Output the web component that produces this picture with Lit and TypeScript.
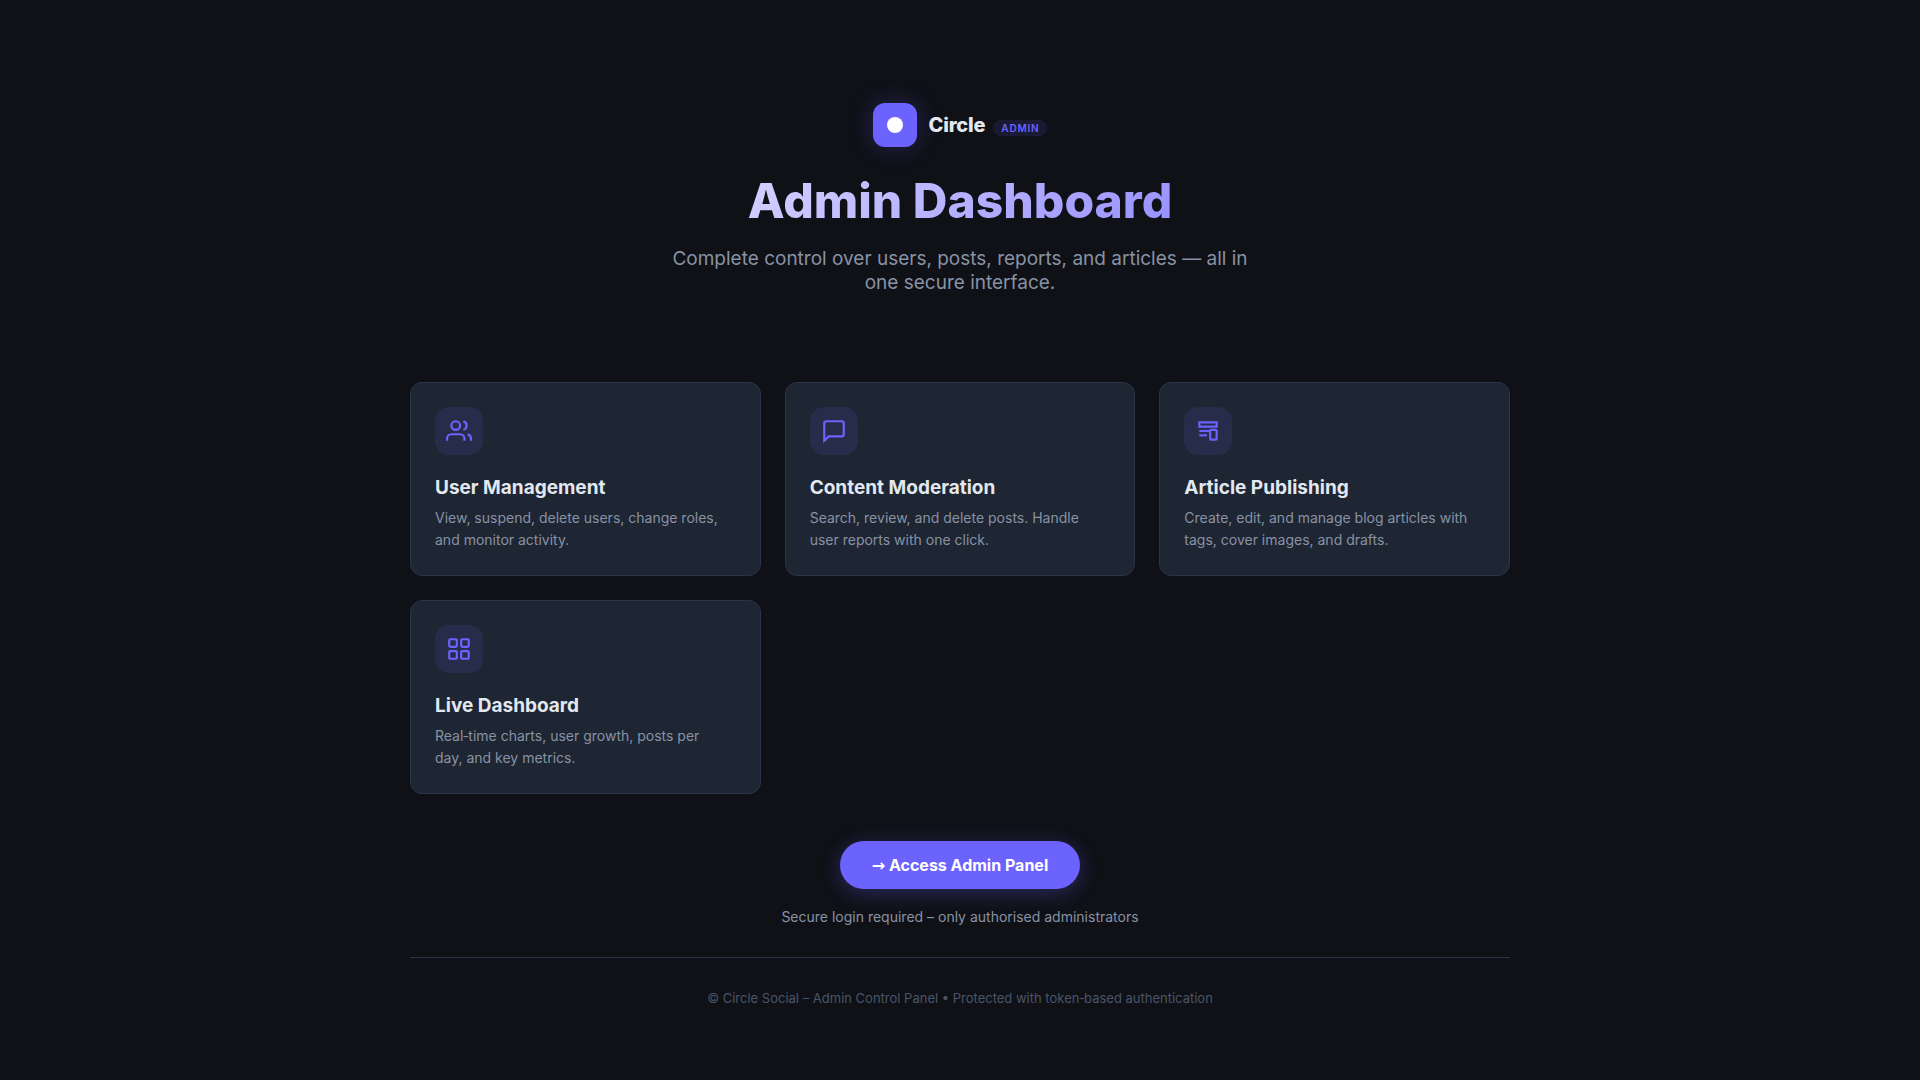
import { LitElement, html, css, svg } from "lit";
import { customElement } from "lit/decorators.js";

const features = [
  {
    title: "User Management",
    text: "View, suspend, delete users, change roles, and monitor activity.",
    icon: svg`<path d="M17 21v-2a4 4 0 0 0-4-4H5a4 4 0 0 0-4 4v2"/><circle cx="9" cy="7" r="4"/><path d="M23 21v-2a4 4 0 0 0-3-3.87"/><path d="M16 3.13a4 4 0 0 1 0 7.75"/>`,
  },
  {
    title: "Content Moderation",
    text: "Search, review, and delete posts. Handle user reports with one click.",
    icon: svg`<path d="M21 15a2 2 0 0 1-2 2H7l-4 4V5a2 2 0 0 1 2-2h14a2 2 0 0 1 2 2z"/>`,
  },
  {
    title: "Article Publishing",
    text: "Create, edit, and manage blog articles with tags, cover images, and drafts.",
    icon: svg`<path d="M4 4h16v4H4z"/><path d="M4 12h10"/><path d="M4 16h7"/><rect x="14" y="11" width="6" height="9" rx="1"/>`,
  },
  {
    title: "Live Dashboard",
    text: "Real‑time charts, user growth, posts per day, and key metrics.",
    icon: svg`<rect x="3" y="3" width="7" height="7" rx="1"/><rect x="14" y="3" width="7" height="7" rx="1"/><rect x="3" y="14" width="7" height="7" rx="1"/><rect x="14" y="14" width="7" height="7" rx="1"/>`,
  },
];

@customElement("app-root")
export class AppRoot extends LitElement {
  static styles = css`
    :host {
      display: flex;
      justify-content: center;
      box-sizing: border-box;
      min-height: 100vh;
      padding: 103px 24px 72px;
      background: #0f1117;
      color: #e2e8f0;
      font-family: Inter, "Liberation Sans", sans-serif;
    }
    .page {
      width: 100%;
      max-width: 1100px;
    }
    .hero {
      display: flex;
      flex-direction: column;
      align-items: center;
      text-align: center;
      margin-bottom: 87px;
    }
    .brand {
      display: flex;
      align-items: center;
      gap: 12px;
      margin-bottom: 24px;
    }
    .mark {
      display: grid;
      place-items: center;
      width: 44px;
      height: 44px;
      border-radius: 12px;
      background: #6c63ff;
      box-shadow: 0 0 24px rgba(108, 99, 255, 0.25);
    }
    .mark svg {
      width: 16px;
      height: 16px;
      fill: #fff;
    }
    .name {
      font-size: 20px;
      line-height: 24px;
      font-weight: 800;
      letter-spacing: -0.01em;
    }
    .badge {
      display: inline-block;
      margin-left: 8px;
      padding: 2px 8px;
      border-radius: 20px;
      background: rgba(108, 99, 255, 0.12);
      color: #6c63ff;
      font-size: 10px;
      line-height: 12px;
      font-weight: 600;
      letter-spacing: 0.08em;
    }
    h1 {
      align-self: stretch;
      margin: 0 0 16px;
      font-size: 48px;
      line-height: 60px;
      font-weight: 800;
      background: linear-gradient(135deg, #fff, #6c63ff);
      background-clip: text;
      -webkit-background-clip: text;
      color: transparent;
    }
    .lead {
      max-width: 600px;
      margin: 0;
      font-size: 19px;
      line-height: 24px;
      color: #8892a4;
    }
    .cards {
      display: grid;
      grid-template-columns: repeat(auto-fill, minmax(280px, 1fr));
      gap: 24px;
      margin-bottom: 47px;
    }
    .card {
      padding: 24px;
      border: 1px solid #2a3449;
      border-radius: 12px;
      background: #1e2533;
    }
    .tile {
      display: grid;
      place-items: center;
      width: 48px;
      height: 48px;
      margin-bottom: 20px;
      border-radius: 14px;
      background: rgba(108, 99, 255, 0.12);
    }
    .tile svg {
      width: 26px;
      height: 26px;
      fill: none;
      stroke: #6c63ff;
      stroke-width: 2;
    }
    h2 {
      margin: 0 0 6px;
      font-size: 19px;
      line-height: 26px;
      font-weight: 700;
    }
    .card p {
      margin: 0;
      padding-right: 8px;
      font-size: 14px;
      line-height: 22px;
      color: #8892a4;
    }
    .access {
      display: flex;
      flex-direction: column;
      align-items: center;
      gap: 20px;
    }
    .button {
      padding: 14px 32px;
      border-radius: 40px;
      background: #6c63ff;
      box-shadow: 0 4px 20px rgba(108, 99, 255, 0.3);
      color: #fff;
      font-size: 16px;
      line-height: 20px;
      font-weight: 700;
      text-decoration: none;
    }
    .arrow {
      font-family: "DejaVu Sans", sans-serif;
      line-height: 1;
    }
    .note {
      margin: 0;
      font-size: 14px;
      line-height: 16px;
      color: #8892a4;
    }
    footer {
      margin-top: 32px;
      padding-top: 32px;
      border-top: 1px solid #2a3449;
      text-align: center;
      font-size: 13px;
      line-height: 16px;
      color: #4a5568;
    }
  `;

  render() {
    return html`
      <main class="page">
        <header class="hero">
          <div class="brand">
            <div class="mark">
              <svg viewBox="0 0 16 16" aria-hidden="true"><circle cx="8" cy="8" r="8" /></svg>
            </div>
            <div class="name">Circle<span class="badge">ADMIN</span></div>
          </div>
          <h1>Admin Dashboard</h1>
          <p class="lead">
            Complete control over users, posts, reports, and articles — all in one secure interface.
          </p>
        </header>
        <section class="cards">
          ${features.map(
            (f) => html`
              <article class="card">
                <div class="tile"><svg viewBox="0 0 24 24" aria-hidden="true">${f.icon}</svg></div>
                <h2>${f.title}</h2>
                <p>${f.text}</p>
              </article>
            `,
          )}
        </section>
        <section class="access">
          <a class="button" href="#login"><span class="arrow">→</span> Access Admin Panel</a>
          <p class="note">Secure login required – only authorised administrators</p>
        </section>
        <footer>© Circle Social – Admin Control Panel • Protected with token‑based authentication</footer>
      </main>
    `;
  }
}
